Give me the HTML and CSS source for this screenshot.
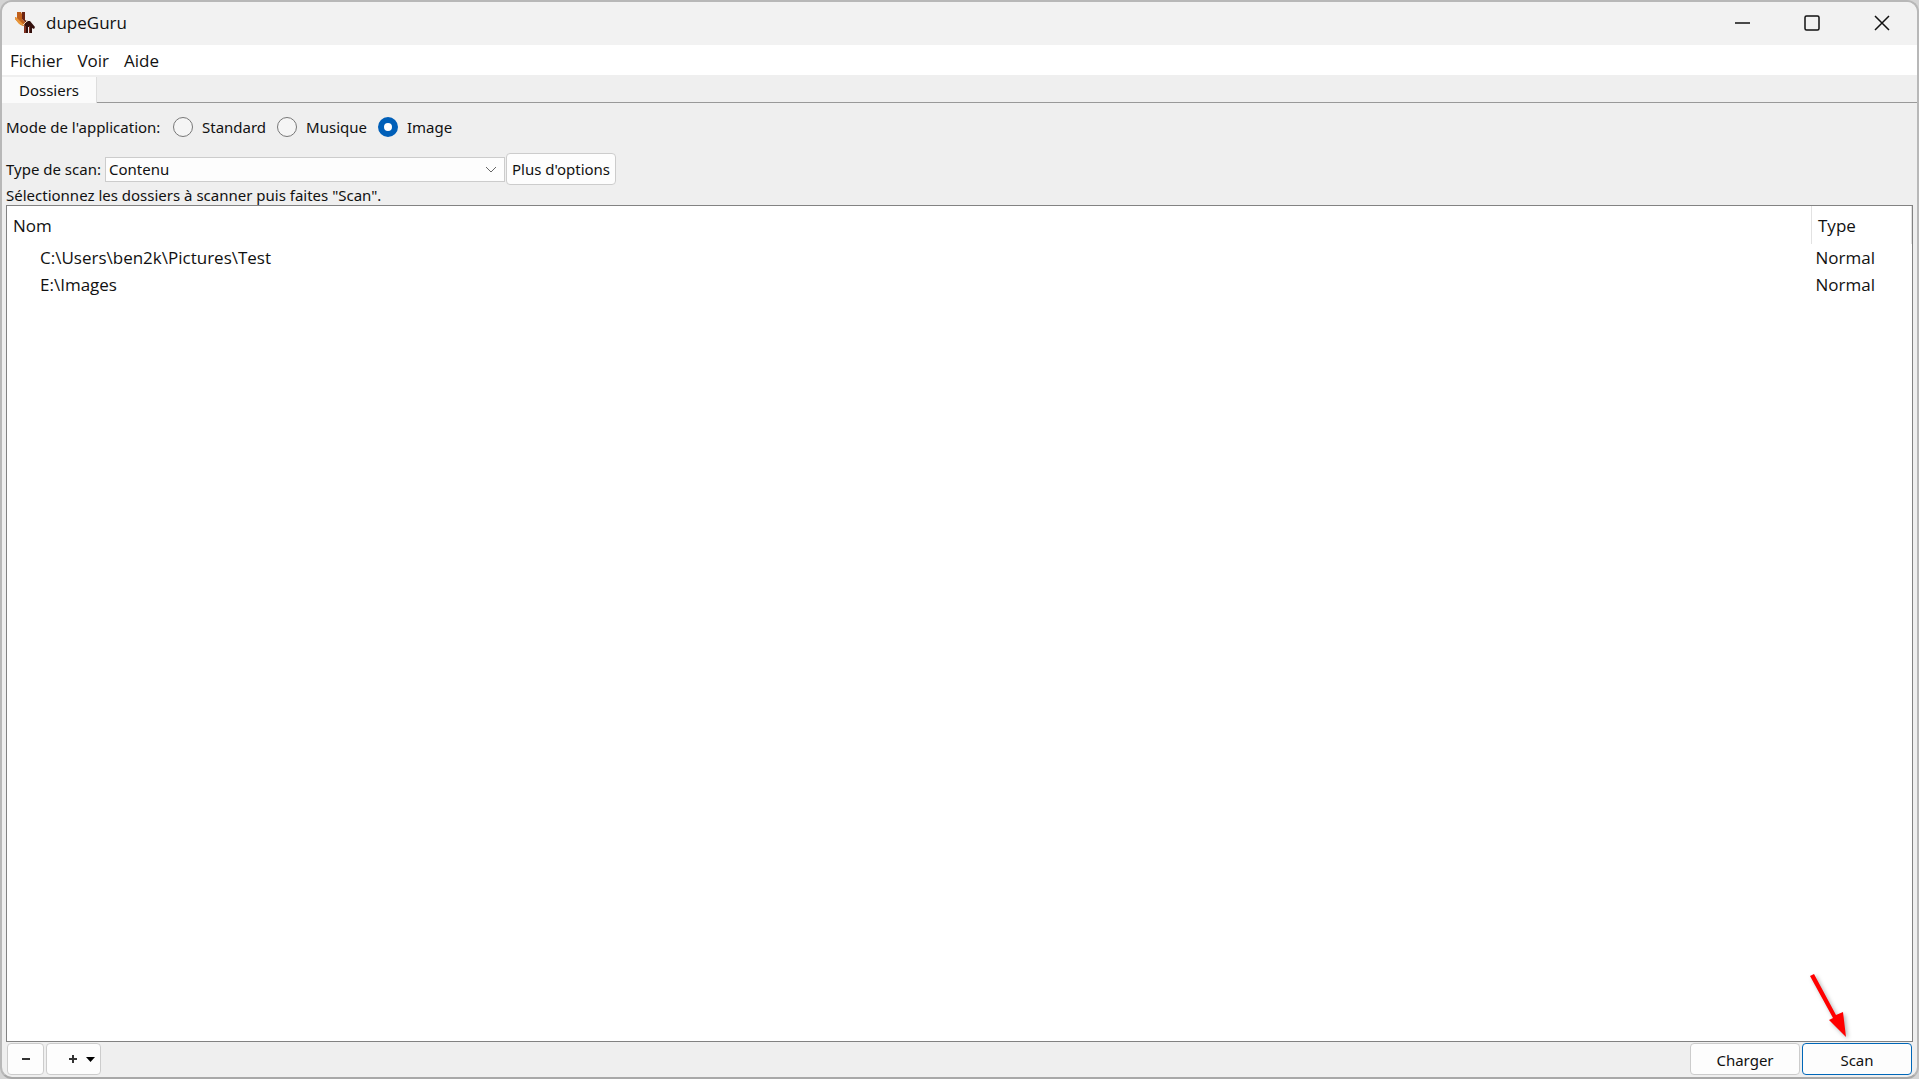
FILE: index.html
```html
<!DOCTYPE html>
<html lang="fr">
<head>
<meta charset="utf-8">
<title>dupeGuru</title>
<link rel="stylesheet" href="styles.css">
</head>
<body>
<div class="window">
  <header class="titlebar">
    <svg class="app-icon" width="20" height="22" viewBox="0 0 20 22" aria-hidden="true">
      <path fill="#c0601c" d="M2 0h4l1 2v5l4 4-2 3-3-1-6-6V5l2 1z"/>
      <path fill="#e8963a" d="M0 5l2 1 5 5 2 2-1 1-4-2-4-5z"/>
      <path fill="#6b2413" d="M7 0h3v8l2 1-1 2-4-4z"/>
      <path fill="#34110e" d="M10 11l3-2 2 0 5 6-1 2-2-1v5h-3v-6h-1v6h-4v-6z"/>
      <path fill="#80301f" d="M9 14h2v7H9zM14 14h1v7h-1z"/>
      <path fill="none" stroke="#f0d8c2" d="M8 13l5-5"/>
    </svg>
    <h1 class="title">dupeGuru</h1>
    <div class="window-controls">
      <button class="control" aria-label="Réduire"><svg width="16" height="16" viewBox="0 0 16 16"><path d="M1 8h15"/></svg></button>
      <button class="control" aria-label="Agrandir"><svg width="16" height="16" viewBox="0 0 16 16"><rect x="1" y="1" width="14" height="14" rx="1.500"/></svg></button>
      <button class="control" aria-label="Fermer"><svg width="16" height="16" viewBox="0 0 16 16"><path d="M1 1l14 14M15 1L1 15"/></svg></button>
    </div>
  </header>
  <nav class="menubar">
    <button class="menu">Fichier</button>
    <button class="menu">Voir</button>
    <button class="menu">Aide</button>
  </nav>
  <div class="tabs" role="tablist">
    <button class="tab" role="tab" aria-selected="true">Dossiers</button>
    <div class="tab-rest"></div>
  </div>
  <main class="content">
    <div class="mode-row" role="radiogroup" aria-labelledby="mode-label">
      <span class="mode-label" id="mode-label">Mode de l'application:</span>
      <label class="mode"><input class="radio" type="radio" name="mode">Standard</label>
      <label class="mode"><input class="radio" type="radio" name="mode">Musique</label>
      <label class="mode"><input class="radio" type="radio" name="mode" checked>Image</label>
    </div>
    <div class="scan-row">
      <label class="scan-label" for="scan-type">Type de scan:</label>
      <div class="select-box">
        <select class="select" id="scan-type"><option>Contenu</option></select>
        <svg class="chevron" width="12" height="8" viewBox="0 0 12 8" aria-hidden="true"><path d="M1 1l5 5 5-5"/></svg>
      </div>
      <button class="button options">Plus d'options</button>
    </div>
    <p class="hint">Sélectionnez les dossiers à scanner puis faites "Scan".</p>
    <div class="list">
      <table class="folders">
        <thead><tr><th>Nom</th><th class="type">Type</th></tr></thead>
        <tbody>
          <tr><td>C:\Users\ben2k\Pictures\Test</td><td class="type">Normal</td></tr>
          <tr><td>E:\Images</td><td class="type">Normal</td></tr>
        </tbody>
      </table>
    </div>
    <footer class="actions">
      <button class="button remove" aria-label="Retirer"><svg width="8" height="8" viewBox="0 0 8 8"><path d="M0 4h8"/></svg></button>
      <button class="button add" aria-label="Ajouter"><svg width="26" height="8" viewBox="0 0 26 8"><path d="M0 4h8M4 0v8"/><path class="caret" d="M17 2h9l-4.500 5z"/></svg></button>
      <button class="button wide load">Charger</button>
      <div class="scan-action">
        <button class="button wide primary">Scan</button>
        <svg class="arrow" width="48" height="76" viewBox="0 0 48 76" aria-hidden="true"><path d="M6 7l4-2 22 41 7-3 3 25-17-17 4-2z"/></svg>
      </div>
    </footer>
  </main>
</div>
</body>
</html>
```
FILE: styles.css
```css
* { box-sizing: border-box; }

body {
  margin: 0;
  background: #d4d4d4;
  color: #111;
  font-family: "Noto Sans", sans-serif;
  font-size: 15px;
  line-height: 20px;
}

button, select {
  margin: 0;
  padding: 0;
  border: 0;
  background: none;
  color: inherit;
  font: inherit;
}

.window {
  display: flex;
  flex-direction: column;
  min-height: 100vh;
  border: 2px solid #b8b8b8;
  border-bottom-color: #a8a8a8;
  border-radius: 12px;
  background: #efefef;
  overflow: hidden;
}

.titlebar {
  display: flex;
  align-items: center;
  height: 43px;
  padding: 0 0 2px 13px;
  background: #f2f2f2;
}
.title, .menubar, .folders {
  font-family: "Open Sans", sans-serif;
  font-size: 17px;
}
.title {
  flex: 1;
  margin: 0 0 0 11px;
  font-weight: 400;
  line-height: 24px;
}
.window-controls { display: flex; }
.control {
  display: grid;
  place-items: center;
  width: 70px;
  height: 40px;
}
.control svg {
  fill: none;
  stroke: #111;
  stroke-width: 1.5;
}

.menubar {
  display: flex;
  gap: 15px;
  height: 30px;
  padding: 2px 0 0 8px;
  background: #fff;
}

.tabs {
  display: flex;
  height: 28px;
  padding-top: 2px;
}
.tab {
  width: 95px;
  border-right: 1px solid #ddd;
  background: #fbfbfb;
}
.tab-rest {
  flex: 1;
  border-bottom: 1px solid #999;
}

.content {
  display: flex;
  flex: 1;
  flex-direction: column;
  padding: 0 4px 2px;
}
.mode-row {
  display: flex;
  align-items: center;
  height: 50px;
  padding-bottom: 2px;
}
.mode-label { width: 167px; }
.mode {
  display: flex;
  align-items: center;
  gap: 9px;
  margin-right: 11px;
}
.radio {
  width: 20px;
  height: 20px;
  margin: 0;
  border: 1px solid #777;
  border-radius: 50%;
  background: #f5f5f5;
  appearance: none;
}
.radio:checked {
  border: 6px solid #005fb8;
  background: #fff;
}

.scan-row {
  display: flex;
  align-items: center;
  height: 32px;
}
.scan-label {
  width: 99px;
  white-space: nowrap;
}
.select-box {
  display: flex;
  position: relative;
  width: 400px;
}
.select {
  width: 100%;
  height: 25px;
  padding-left: 3px;
  border: 1px solid #ccc;
  background: #fdfdfd;
  appearance: none;
}
.chevron {
  position: absolute;
  top: 9px;
  right: 8px;
  fill: none;
  stroke: #666;
  pointer-events: none;
}

.button {
  display: grid;
  place-items: center;
  height: 32px;
  border: 1px solid #ccc;
  border-radius: 4px;
  background: #fdfdfd;
}
.options {
  width: 110px;
  margin-left: 1px;
}

.hint {
  margin: 0;
  line-height: 20px;
}

.list {
  flex: 1;
  border: 1px solid #828282;
  background: #fff;
}
.folders {
  width: 100%;
  border-collapse: collapse;
}
.folders th {
  height: 38px;
  padding: 2px 6px 0;
  font-weight: 400;
  text-align: left;
}
.folders td {
  height: 27px;
  padding: 0 0 0 33px;
}
.folders .type { width: 100px; }
.folders th.type {
  border-right: 1px solid #e2e2e2;
  border-left: 1px solid #e2e2e2;
}
.folders td.type { padding-left: 4px; }

.actions {
  display: flex;
  gap: 2px;
  padding: 1px 1px 0;
}
.remove { width: 37px; }
.add {
  width: 55px;
  padding-left: 17px;
}
.actions .button path {
  fill: none;
  stroke: #333;
  stroke-width: 2;
}
.actions .button .caret {
  fill: #000;
  stroke: none;
}
.wide {
  width: 110px;
  padding-top: 1px;
}
.load { margin-left: auto; }
.primary { border-color: #0067b8; }
.scan-action { position: relative; }
.arrow {
  position: absolute;
  right: 60px;
  bottom: 30px;
  fill: #f00;
  filter: drop-shadow(2px 2px 2px rgba(0, 0, 0, 0.3));
  pointer-events: none;
}
```
